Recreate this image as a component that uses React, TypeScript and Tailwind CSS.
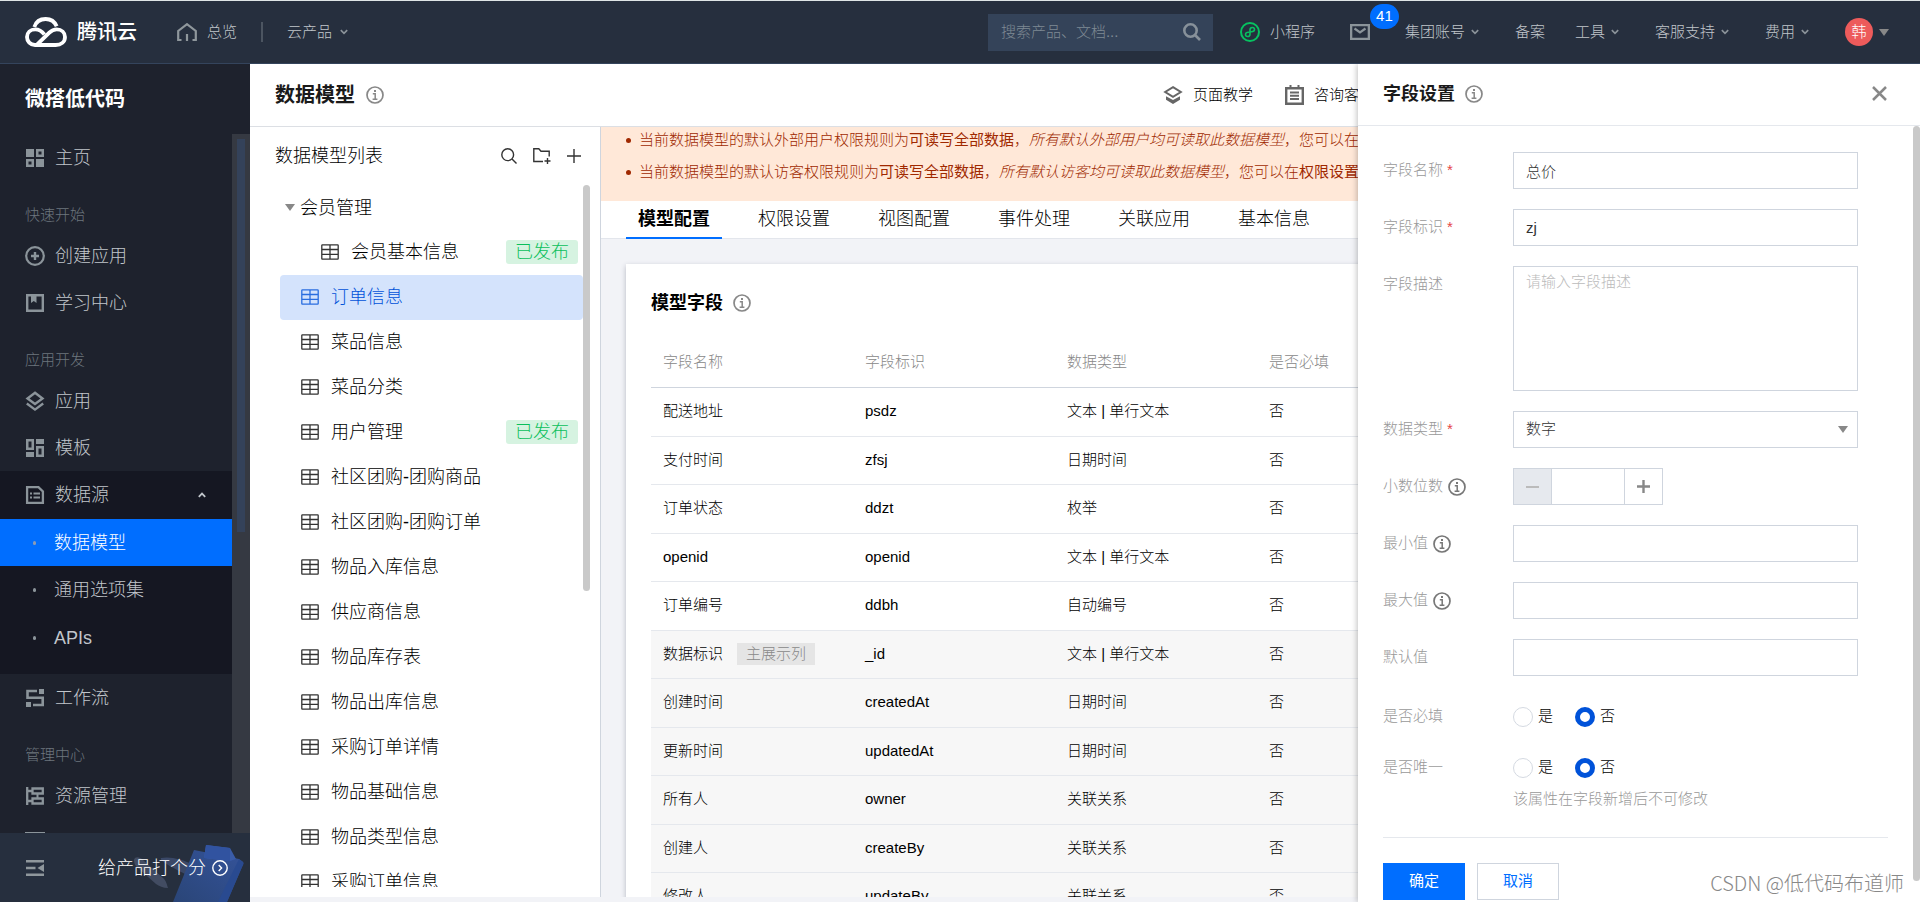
import React from "react";

type IconProps = { className?: string };

function InfoIcon({ className = "text-[#888]" }: IconProps) {
  return (
    <svg className={`size-[18px] shrink-0 ${className}`} viewBox="0 0 18 18" fill="none" stroke="currentColor">
      <circle cx="9" cy="9" r="8" strokeWidth="1.7" />
      <path d="M9 3.9v2" strokeWidth="2" />
      <path d="M6.8 7.8H9.2V13M6.6 13.2h4.8" strokeWidth="1.5" />
    </svg>
  );
}

function Chevron({ className = "text-[#8a9299]" }: IconProps) {
  return (
    <svg className={`h-2 w-2 shrink-0 ${className}`} viewBox="0 0 8 8" fill="none" stroke="currentColor" strokeWidth="1.7">
      <path d="M.8 2.2 4 5.4l3.200-3.200" />
    </svg>
  );
}

function Caret({ className = "text-[#888]" }: IconProps) {
  return (
    <svg className={`h-[7px] w-[10px] shrink-0 ${className}`} viewBox="0 0 10 7" fill="currentColor">
      <path d="M0 0h10L5 7z" />
    </svg>
  );
}

function TableIcon() {
  return (
    <svg className="h-4 w-[18px] shrink-0 opacity-80" viewBox="0 0 18 16" fill="none" stroke="currentColor" strokeWidth="1.300">
      <rect x=".8" y=".8" width="16.4" height="14.4" rx=".6" />
      <path d="M9 1v14M1 5.500h16M1 10.400h16" />
    </svg>
  );
}

function CloudLogo() {
  return (
    <svg className="h-[30px] w-[42px]" viewBox="75 51 126 90" fill="none" stroke="#fff" strokeWidth="11.500">
      <path d="M103 81C108 65 121 57 137 57c14 0 27 8 33 22" />
      <path d="M133 103C126 94 117 88 106 88 91 88 81 98 81 111s10 24 24 24h62c16 0 28-9 28-24 0-13-10-23-25-23-9 0-16 4-22 10l-37 36" />
    </svg>
  );
}

const navIcons: Record<string, React.ReactNode> = {
  home: (
    <g fill="currentColor">
      <path d="M0 0h8v8H0zM10 10h8v8h-8z" />
      <path fillRule="evenodd" d="M10 0h8v8h-8zm2.500 2.500v3h3v-3zM0 10h8v8H0zm2.500 2.500v3h3v-3z" />
    </g>
  ),
  plus: (
    <g fill="none" stroke="currentColor">
      <circle cx="9" cy="9" r="8.800" strokeWidth="2.200" />
      <path d="M9 5v8M5 9h8" strokeWidth="2.400" />
    </g>
  ),
  book: (
    <g>
      <path d="M1.200 1.200h15.600v15.600H1.200z" fill="none" stroke="currentColor" strokeWidth="2.400" />
      <path d="M5 1h5.500v8L7.800 7 5 9z" fill="currentColor" />
    </g>
  ),
  app: (
    <g fill="none" stroke="currentColor" strokeWidth="2.400">
      <path d="M9 .8 16.500 6.500 9 12 1.500 6.500z" />
      <path d="M.8 11.500 9 17.600l8.200-6.100" />
    </g>
  ),
  template: (
    <g fill="currentColor">
      <path fillRule="evenodd" d="M0 0h8v11H0zm2.500 2.500v6h3v-6zM10 7h8v11h-8zm2.500 2.500v6h3v-6z" />
      <path d="M10 0h8v5h-8zM0 13h8v5H0z" />
    </g>
  ),
  data: (
    <g fill="none" stroke="currentColor" strokeWidth="2.300">
      <path d="M1.100 1.100h11.400l4.400 4.400v11.400H1.100z" />
      <path d="M4 7.500h2m1.500 0H14M4 11.500h2m1.500 0H14" strokeWidth="2" />
    </g>
  ),
  flow: (
    <g>
      <path d="M11 2H1.500v6.800h15.200V16H7" fill="none" stroke="currentColor" strokeWidth="2.600" />
      <path d="M13 0h5v5h-5zM0 13h5v5H0z" fill="currentColor" />
    </g>
  ),
  resource: (
    <g fill="none" stroke="currentColor" strokeWidth="2.300">
      <path d="M1.200 0v18M1.200 4h5M1.200 14h5" />
      <path d="M6.500 1.500h10.300v5H6.500zM6.500 11.500h10.300v5H6.500z" />
      <path d="M11.500 6v5" strokeWidth="2" />
    </g>
  ),
};

function NavIcon({ name }: { name: string }) {
  return (
    <svg className="size-[18px] shrink-0 overflow-visible text-[#8b949a]" viewBox="0 0 18 18">
      {navIcons[name]}
    </svg>
  );
}

function NavRow({ icon, label }: { icon: string; label: string }) {
  return (
    <a href="#" className="flex h-[47px] items-center gap-[11px] pl-[26px] text-[#c1c6cb]">
      <NavIcon name={icon} />
      {label}
    </a>
  );
}

function NavHeading({ children }: { children: React.ReactNode }) {
  return <h3 className="flex h-[51px] items-end pl-[25px] text-[15px] leading-[34px] text-[#6d767e]">{children}</h3>;
}

function TopBar() {
  return (
    <header className="flex h-16 shrink-0 items-center border-t border-b border-t-[#dfe5e6] border-b-[#34445c] bg-[#262f3e] pr-[31px] pl-[25px] text-[15px] text-[#c1c6cb]">
      <a href="#" className="flex items-center gap-2.5 text-xl font-medium text-white">
        <CloudLogo />
        腾讯云
      </a>
      <a href="#" className="ml-10 flex items-center gap-2.5">
        <svg className="h-[18px] w-5" viewBox="0 0 20 18" fill="none" stroke="#8f979c" strokeWidth="2.200">
          <path d="M4.500 17H1.200V8L10 1.200 18.800 8v9h-3.300M10 11v7" />
        </svg>
        总览
      </a>
      <span className="mx-6 h-5 w-0.5 bg-[#4c5561]" />
      <a href="#" className="flex items-center gap-2">
        云产品
        <Chevron />
      </a>
      <div className="ml-auto flex items-center">
        <label className="flex h-[37px] w-[225px] items-center justify-between bg-[#344359] pr-3 pl-[13px]">
          <input
            type="text"
            aria-label="搜索"
            placeholder="搜索产品、文档..."
            className="w-40 bg-transparent outline-none placeholder:text-[#7f8a94]"
          />
          <svg className="size-[18px]" viewBox="0 0 18 18" fill="none" stroke="#87919a" strokeWidth="2.600">
            <circle cx="7.500" cy="7.500" r="6.200" />
            <path d="m12 12 5 5" />
          </svg>
        </label>
        <a href="#" className="ml-[27px] flex items-center gap-2.5">
          <svg className="size-5" viewBox="0 0 20 20" fill="none" stroke="#07c160" strokeWidth="2">
            <circle cx="10" cy="10" r="9" />
            <path
              d="M11.400 9.700c1.900 0 3.100-.9 3.100-2.200 0-1.200-.9-2-2.100-2C11 5.500 10 6.400 10 7.800v4.400c0 1.400-1 2.300-2.400 2.300-1.200 0-2.100-.8-2.100-2 0-1.300 1.200-2.200 3.100-2.200"
              strokeWidth="1.600"
              strokeLinecap="round"
            />
          </svg>
          小程序
        </a>
        <a href="#" aria-label="消息" className="relative ml-[35px]">
          <svg className="h-4 w-5" viewBox="0 0 20 16" fill="none" stroke="#8b949a" strokeWidth="2.400">
            <path d="M1.100 1.100h17.800v13.800H1.100z" />
            <path d="m4.500 4.500 5.500 4 5.500-4" strokeWidth="2.200" />
          </svg>
          <span className="absolute -top-5 left-5 flex h-[25px] w-[29px] items-center justify-center rounded-full bg-[#006eff] text-[15px] text-white">
            41
          </span>
        </a>
        <a href="#" className="ml-[35px] flex items-center gap-1.5">
          集团账号
          <Chevron />
        </a>
        <a href="#" className="ml-9">
          备案
        </a>
        <a href="#" className="ml-[30px] flex items-center gap-1.5">
          工具
          <Chevron />
        </a>
        <a href="#" className="ml-9 flex items-center gap-1.5">
          客服支持
          <Chevron />
        </a>
        <a href="#" className="ml-9 flex items-center gap-1.5">
          费用
          <Chevron />
        </a>
        <button type="button" className="ml-9 flex items-center gap-1.5">
          <span className="flex size-7 items-center justify-center rounded-full bg-[#ed5b5b] text-white">韩</span>
          <Caret />
        </button>
      </div>
    </header>
  );
}

function SideBar() {
  return (
    <aside className="flex w-[250px] shrink-0 flex-col bg-[#1e222d] text-lg">
      <h1 className="flex h-[70px] shrink-0 items-center pl-[25px] text-xl font-bold text-white">微搭低代码</h1>
      <div className="flex min-h-0 flex-1">
        <nav className="flex-1 overflow-hidden">
          <NavRow icon="home" label="主页" />
          <NavHeading>快速开始</NavHeading>
          <NavRow icon="plus" label="创建应用" />
          <NavRow icon="book" label="学习中心" />
          <NavHeading>应用开发</NavHeading>
          <NavRow icon="app" label="应用" />
          <NavRow icon="template" label="模板" />
          <div className="bg-[#151722] pb-3 text-[#c1c6cb]">
            <button type="button" className="flex h-12 w-full items-center gap-[11px] pr-[26px] pl-[26px]">
              <NavIcon name="data" />
              数据源
              <svg className="ml-auto h-2 w-2" viewBox="0 0 8 8" fill="none" stroke="currentColor" strokeWidth="1.800">
                <path d="M.8 5.800 4 2.600l3.200 3.200" />
              </svg>
            </button>
            <a href="#" className="flex h-[47px] items-center gap-[18px] bg-[#006eff] pl-[33px] text-white">
              <span className="h-1 w-[3px] rounded-full bg-[#8b9bb5]" />
              数据模型
            </a>
            <a href="#" className="flex h-12 items-center gap-[18px] pl-[33px]">
              <span className="h-1 w-[3px] rounded-full bg-[#8b949a]" />
              通用选项集
            </a>
            <a href="#" className="flex h-12 items-center gap-[18px] pl-[33px]">
              <span className="h-1 w-[3px] rounded-full bg-[#8b949a]" />
              APIs
            </a>
          </div>
          <NavRow icon="flow" label="工作流" />
          <NavHeading>管理中心</NavHeading>
          <NavRow icon="resource" label="资源管理" />
          <a href="#" aria-label="更多" className="flex h-[47px] items-start pt-[13px] pl-[25px] text-[#8b949a]">
            <svg className="size-5" viewBox="0 0 20 20" fill="none" stroke="currentColor" strokeWidth="2.400">
              <path d="M0 1.200h20M1.200 1v17.800h17.600V1" />
            </svg>
          </a>
        </nav>
        <div className="w-[18px] bg-[#353942] px-[5px] pt-[5px]">
          <div className="h-[393px] w-2 bg-[#34425a]" />
        </div>
      </div>
      <footer className="relative flex h-[69px] shrink-0 items-center bg-[#262f3e] pr-[22px] pl-[26px]">
        <svg className="absolute right-0 bottom-0 h-[60px] w-[124px]" viewBox="0 0 124 60">
          <defs>
            <linearGradient id="board" x1="0" y1="1" x2="1" y2="0">
              <stop offset="0" stopColor="#2a4577" />
              <stop offset="1" stopColor="#34539a" />
            </linearGradient>
          </defs>
          <path d="M8 18c1-4 6-3 9 0l20 18c3 2 4 7 5 10-5 0-9-2-12-4L12 26c-3-2-4-5-4-8z" fill="#424c62" />
          <path d="M35 16c9-2 20 1 34 7l-6 11c-8-4-18-9-24-13-3-2-5-4-4-5z" fill="#3a4867" />
          <path d="M68 8 113 17l4 3c1 1 0 3-1 5L101 60H47z" fill="url(#board)" />
          <path d="M113 17l4 3c1 1 0 3-1 5L101 60h-9z" fill="#294a90" />
          <path d="M80 3 104 6l6 11-6 2-26-3z" fill="#3a5ca8" />
          <path d="M80 3 78 16l26 3 0-13z" fill="#3153a0" />
        </svg>
        <button type="button" aria-label="收起">
          <svg className="h-4 w-[18px]" viewBox="0 0 18 16" fill="#8f979c">
            <path d="M0 0h18v2.400H0zM0 6.800h9.500v2.400H0zM0 13.600h18V16H0zM18 4v8l-6.500-4z" />
          </svg>
        </button>
        <button type="button" className="relative ml-auto flex items-center gap-1.5 text-white">
          给产品打个分
          <svg className="size-4" viewBox="0 0 16 16" fill="none" stroke="currentColor" strokeWidth="1.400">
            <circle cx="8" cy="8" r="7.200" />
            <path d="M6.700 5 9.600 8l-2.900 3" />
          </svg>
        </button>
      </footer>
    </aside>
  );
}

type Model = { name: string; published?: boolean; nested?: boolean; active?: boolean };

const models: Model[] = [
  { name: "会员基本信息", published: true, nested: true },
  { name: "订单信息", active: true },
  { name: "菜品信息" },
  { name: "菜品分类" },
  { name: "用户管理", published: true },
  { name: "社区团购-团购商品" },
  { name: "社区团购-团购订单" },
  { name: "物品入库信息" },
  { name: "供应商信息" },
  { name: "物品库存表" },
  { name: "物品出库信息" },
  { name: "采购订单详情" },
  { name: "物品基础信息" },
  { name: "物品类型信息" },
  { name: "采购订单信息" },
];

function ModelList() {
  return (
    <section className="flex w-[351px] shrink-0 flex-col border-r border-[#cfd5de] bg-white pb-2.5 text-lg">
      <div className="flex h-[58px] shrink-0 items-center pr-[19px] pl-[25px]">
        <h2>数据模型列表</h2>
        <div className="ml-auto flex items-center gap-4 text-[#333]">
          <button type="button" aria-label="搜索">
            <svg className="size-4" viewBox="0 0 16 16" fill="none" stroke="currentColor" strokeWidth="1.400">
              <circle cx="6.700" cy="6.700" r="5.900" />
              <path d="m11 11 4.500 4.500" />
            </svg>
          </button>
          <button type="button" aria-label="新建分组">
            <svg className="h-4 w-[18px]" viewBox="0 0 18 16" fill="none" stroke="currentColor" strokeWidth="1.400">
              <path d="M10 13.500H.8V.8h5l2.200 2.500h8.200v5.200M14.500 10v6M11.500 13h6" />
            </svg>
          </button>
          <button type="button" aria-label="新建">
            <svg className="size-[14px]" viewBox="0 0 14 14" fill="none" stroke="currentColor" strokeWidth="1.400">
              <path d="M7 0v14M0 7h14" />
            </svg>
          </button>
        </div>
      </div>
      <div className="flex min-h-0 flex-1 overflow-hidden pl-[30px]">
        <ul className="flex-1">
          <li>
            <button type="button" className="flex h-[45px] items-center gap-[5px] pl-[5px]">
              <Caret />
              会员管理
            </button>
          </li>
          {models.map((m) => (
            <li key={m.name}>
              <a
                href="#"
                className={`flex h-[45px] items-center gap-3 rounded pr-[5px] pb-px ${m.nested ? "pl-[41px]" : "pl-[21px]"} ${
                  m.active ? "bg-[#d4e3fc] text-[#0052d9]" : "text-black"
                }`}
              >
                <TableIcon />
                {m.name}
                {m.published && (
                  <span className="ml-auto flex h-6 w-[72px] items-center justify-center rounded-[3px] bg-[#d6f3e1] text-[#0abf5b]">
                    已发布
                  </span>
                )}
              </a>
            </li>
          ))}
        </ul>
        <div className="mr-2.5 h-[406px] w-[7px] rounded-full bg-[#c9c9c9]" />
      </div>
    </section>
  );
}

const tabs = ["模型配置", "权限设置", "视图配置", "事件处理", "关联应用", "基本信息"];

const fields = [
  { name: "配送地址", id: "psdz", type: "文本 | 单行文本" },
  { name: "支付时间", id: "zfsj", type: "日期时间" },
  { name: "订单状态", id: "ddzt", type: "枚举" },
  { name: "openid", id: "openid", type: "文本 | 单行文本" },
  { name: "订单编号", id: "ddbh", type: "自动编号" },
  { name: "数据标识", id: "_id", type: "文本 | 单行文本", system: true, primary: true },
  { name: "创建时间", id: "createdAt", type: "日期时间", system: true },
  { name: "更新时间", id: "updatedAt", type: "日期时间", system: true },
  { name: "所有人", id: "owner", type: "关联关系", system: true },
  { name: "创建人", id: "createBy", type: "关联关系", system: true },
  { name: "修改人", id: "updateBy", type: "关联关系", system: true },
];

function Detail() {
  return (
    <section className="flex min-w-0 flex-1 flex-col bg-[#f2f3f7]">
      <ul className="shrink-0 list-none bg-[#ffe8d8] pb-4 pl-[25px] text-[15px] leading-[26px] whitespace-nowrap text-[#a02800]">
        <li className="mb-1.5 flex items-center gap-2">
          <span className="size-[5px] rounded-full bg-[#a02800]" />
          <p>
            当前数据模型的默认外部用户权限规则为<b>可读写全部数据</b>，<i>所有默认外部用户均可读取此数据模型</i>，您可以在
            <b>权限设置</b>
          </p>
        </li>
        <li className="flex items-center gap-2">
          <span className="size-[5px] rounded-full bg-[#a02800]" />
          <p>
            当前数据模型的默认访客权限规则为<b>可读写全部数据</b>，<i>所有默认访客均可读取此数据模型</i>，您可以在
            <b>权限设置</b>
          </p>
        </li>
      </ul>
      <nav className="flex h-[38px] shrink-0 gap-6 border-b border-[#e3e6ec] bg-white pl-[25px] text-lg">
        {tabs.map((t, i) => (
          <a
            key={t}
            href="#"
            className={`-mb-px flex items-center border-b-2 px-3 ${
              i === 0 ? "border-[#006eff] font-bold" : "border-transparent"
            }`}
          >
            {t}
          </a>
        ))}
      </nav>
      <div className="mb-[5px] min-h-0 flex-1 overflow-hidden pt-[25px] pl-[25px]">
        <div className="bg-white px-[25px] pt-[25px] shadow-[0_2px_5px_rgba(54,58,80,0.32)]">
          <h2 className="flex items-center gap-2.5 text-lg font-bold">
            模型字段
            <InfoIcon />
          </h2>
          <table className="mt-5 w-full table-fixed text-left text-[15px]">
            <thead>
              <tr className="h-[50px] border-b border-[#cfd5de] text-[#888]">
                <th className="w-[202px] pl-3 font-light">字段名称</th>
                <th className="w-[202px] pl-3 font-light">字段标识</th>
                <th className="w-[202px] pl-3 font-light">数据类型</th>
                <th className="pl-3 font-light">是否必填</th>
              </tr>
            </thead>
            <tbody>
              {fields.map((f) => (
                <tr
                  key={f.id}
                  className={`border-b border-[#e5e8ed] odd:h-[49px] even:h-12 ${f.system ? "bg-[#f7f7f7]" : "bg-white"}`}
                >
                  <td className="pl-3 whitespace-nowrap">
                    {f.name}
                    {f.primary && (
                      <span className="ml-[14px] inline-block bg-[#e5e5e5] px-[9px] leading-[22px] text-[#888]">
                        主展示列
                      </span>
                    )}
                  </td>
                  <td className="pl-3">{f.id}</td>
                  <td className="pl-3">{f.type}</td>
                  <td className="pl-3">否</td>
                </tr>
              ))}
            </tbody>
          </table>
        </div>
      </div>
    </section>
  );
}

function FieldRow({
  label,
  htmlFor,
  required,
  info,
  children,
}: {
  label: string;
  htmlFor?: string;
  required?: boolean;
  info?: boolean;
  children: React.ReactNode;
}) {
  return (
    <div className="flex items-start">
      <label htmlFor={htmlFor} className="flex h-[37px] w-[130px] shrink-0 items-center text-[#999]">
        {label}
        {required && <span className="ml-1 text-[#e54545]">*</span>}
        {info && <InfoIcon className="ml-[5px] text-[#777]" />}
      </label>
      {children}
    </div>
  );
}

const box = "block h-[37px] w-full border border-[#cfd5de] bg-white px-3 text-[#333] outline-none";

function YesNo({ name, hint }: { name: string; hint?: string }) {
  const radio =
    "size-5 appearance-none rounded-full border border-[#d5dae2] bg-white checked:border-[5px] checked:border-[#0052d9]";
  return (
    <div>
      <div role="radiogroup" aria-label={name} className="flex h-[37px] items-center gap-[22px]">
        <label className="flex items-center gap-[5px]">
          <input type="radio" name={name} className={radio} />是
        </label>
        <label className="flex items-center gap-[5px]">
          <input type="radio" name={name} defaultChecked className={radio} />否
        </label>
      </div>
      {hint && <p className="mt-0.5 leading-[22px] text-[#999]">{hint}</p>}
    </div>
  );
}

function Drawer() {
  return (
    <aside className="absolute inset-y-0 right-0 flex w-[562px] flex-col bg-white text-[15px] shadow-[-1px_0_6px_rgba(0,0,0,0.25)]">
      <div className="flex h-[62px] shrink-0 items-center gap-2.5 border-b border-[#e5e8ed] pr-[33px] pb-0.5 pl-[25px]">
        <h2 className="text-lg font-bold text-[#1a1a1a]">字段设置</h2>
        <InfoIcon />
        <button type="button" aria-label="关闭" className="ml-auto">
          <svg className="size-[15px]" viewBox="0 0 15 15" fill="none" stroke="#888" strokeWidth="2.500">
            <path d="m1 1 13 13M14 1 1 14" />
          </svg>
        </button>
      </div>
      <div className="flex min-h-0 flex-1 overflow-hidden">
        <form className="flex-1 px-[25px] pt-[26px]">
          <div className="flex flex-col gap-5 pr-[30px]">
            <FieldRow label="字段名称" htmlFor="f-name" required>
              <input id="f-name" type="text" defaultValue="总价" className={box} />
            </FieldRow>
            <FieldRow label="字段标识" htmlFor="f-id" required>
              <input id="f-id" type="text" defaultValue="zj" className={box} />
            </FieldRow>
            <FieldRow label="字段描述" htmlFor="f-desc">
              <textarea
                id="f-desc"
                placeholder="请输入字段描述"
                className="block h-[125px] w-full resize-none border border-[#cfd5de] px-3 py-1 text-[#333] outline-none placeholder:text-[#bbb]"
              />
            </FieldRow>
            <FieldRow label="数据类型" htmlFor="f-type" required>
              <div className="relative w-full">
                <select id="f-type" className={`${box} appearance-none`}>
                  <option>数字</option>
                </select>
                <span className="pointer-events-none absolute inset-y-0 right-2.5 flex items-center">
                  <Caret />
                </span>
              </div>
            </FieldRow>
            <FieldRow label="小数位数" htmlFor="f-decimal" info>
              <div className="flex h-[37px] w-[150px] border border-[#cfd5de] text-[#888]">
                <button
                  type="button"
                  aria-label="减少"
                  disabled
                  className="flex w-[38px] shrink-0 items-center justify-center border-r border-[#cfd5de] bg-[#e6e9ee]"
                >
                  <span className="h-0.5 w-[13px] bg-[#bbb]" />
                </button>
                <input id="f-decimal" type="text" className="min-w-0 flex-1 outline-none" />
                <button
                  type="button"
                  aria-label="增加"
                  className="flex w-[38px] shrink-0 items-center justify-center border-l border-[#cfd5de]"
                >
                  <svg className="size-[13px]" viewBox="0 0 13 13" stroke="currentColor" strokeWidth="2.400">
                    <path d="M6.500 0v13M0 6.500h13" />
                  </svg>
                </button>
              </div>
            </FieldRow>
            <FieldRow label="最小值" htmlFor="f-min" info>
              <input id="f-min" type="text" className={box} />
            </FieldRow>
            <FieldRow label="最大值" htmlFor="f-max" info>
              <input id="f-max" type="text" className={box} />
            </FieldRow>
            <FieldRow label="默认值" htmlFor="f-default">
              <input id="f-default" type="text" className={box} />
            </FieldRow>
          </div>
          <div className="mt-[22px] flex flex-col gap-[14px] border-b border-[#e5e8ed] pb-[27px]">
            <FieldRow label="是否必填">
              <YesNo name="是否必填" />
            </FieldRow>
            <FieldRow label="是否唯一">
              <YesNo name="是否唯一" hint="该属性在字段新增后不可修改" />
            </FieldRow>
          </div>
          <div className="mt-[25px] flex gap-3">
            <button type="button" className="h-[37px] w-[82px] bg-[#006eff] font-normal text-white">
              确定
            </button>
            <button type="button" className="h-[37px] w-[82px] border border-[#cfd5de] font-normal text-[#006eff]">
              取消
            </button>
          </div>
        </form>
        <div className="h-[755px] w-[7px] rounded-full bg-[#c9c9c9]" />
      </div>
      <p className="pointer-events-none absolute right-4 bottom-[5px] font-['Noto_Sans_CJK_SC',sans-serif] text-xl leading-7 text-[#888]">
        CSDN @低代码布道师
      </p>
    </aside>
  );
}

export default function App() {
  return (
    <div className="flex h-screen flex-col overflow-hidden bg-[#f2f3f7] font-['Liberation_Sans','Noto_Sans_CJK_SC',sans-serif] font-light text-black">
      <TopBar />
      <div className="flex min-h-0 flex-1">
        <SideBar />
        <main className="relative flex min-w-0 flex-1 flex-col overflow-hidden">
          <div className="flex h-[63px] shrink-0 items-center border-b border-[#dcdfe4] bg-white pr-[546px] pl-[25px] text-[15px]">
            <h2 className="mr-[11px] text-xl font-bold text-[#1a1a1a]">数据模型</h2>
            <InfoIcon />
            <a href="#" className="ml-auto flex items-center gap-2.5">
              <svg className="h-[18px] w-5" viewBox="0 0 20 18" fill="none" stroke="#666">
                <path d="M10 1.200 17.800 6 10 10.800 2.200 6z" strokeWidth="2" />
                <path d="M3 10.200 10 14l7-3.800v3.600L10 18l-7-4.200z" fill="#666" stroke="none" />
              </svg>
              页面教学
            </a>
            <a href="#" className="ml-8 flex items-center gap-2.5">
              <svg className="h-5 w-[19px]" viewBox="0 0 19 20" fill="none" stroke="#666">
                <path d="M1.200 3.200h16.600v15.600H1.200z" strokeWidth="2.400" />
                <path d="M5.500 0v4M13.500 0v4M5 7.500h9M5 10.800h9M5 14h9" strokeWidth="2" />
              </svg>
              咨询客服
            </a>
          </div>
          <div className="flex min-h-0 flex-1">
            <div className="mb-[5px] flex">
              <ModelList />
            </div>
            <Detail />
          </div>
          <Drawer />
        </main>
      </div>
    </div>
  );
}
